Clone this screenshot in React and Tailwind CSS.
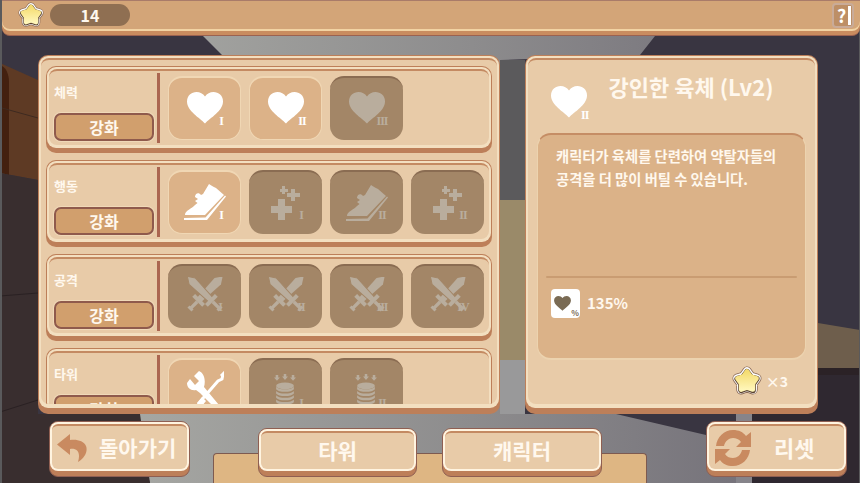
const cream = "text-[#fff8ee]";

function Heart({ className = "" }) {
  return (
    <svg viewBox="0 0 36 32" className={className} fill="currentColor">
      <path d="M18 31.500 C13 26 0 19 0 9.500 C0 3.500 4.500 0 9.500 0 C13 0 16 1.500 18 4.500 C20 1.500 23 0 26.500 0 C31.500 0 36 3.500 36 9.500 C36 19 23 26 18 31.500 Z" />
    </svg>
  );
}

function Shoe({ className = "" }) {
  return (
    <svg viewBox="0 0 42 37" className={className} fill="currentColor">
      <path d="M1 31 C1 26 8 25 11 21 L13.500 19 L11 17 L14 15 L11 13 C11 9 15 8 17 11 L19 10 L25 0 C27 1 29 3 32 4 L40 11 L21 31 Z" />
      <path d="M0 34 L21.500 33.500 L41 11.500 L42 12.500 L23 36 L0 36 Z" />
    </svg>
  );
}

function Sparkle({ className = "" }) {
  return (
    <svg viewBox="0 0 30 35" className={className} fill="currentColor">
      <path d="M7 13 H14 V20 H21 V27 H14 V34 H7 V27 H0 V20 H7 Z" />
      <path d="M20 3 H24 V7 H29 V11 H24 V15 H20 V11 H16 V7 H20 Z" />
      <path d="M11 0 H14 V3 H17 V6 H14 V8 H11 V6 H9 V3 H11 Z" />
    </svg>
  );
}

function Sword({ angle, edge }) {
  return (
    <g transform={`translate(18 17) rotate(${angle})`}>
      <path d="M0 -25 L4.500 -18 L3 8 L-3 8 L-4.500 -18 Z" stroke={edge} strokeWidth={edge ? 1 : 0} />
      <rect x="-7" y="7" width="14" height="4" />
      <rect x="-1.700" y="11" width="3.400" height="9" />
      <rect x="-2.800" y="19" width="5.600" height="3" />
    </g>
  );
}

function Swords({ className = "" }) {
  return (
    <svg viewBox="0 0 36 36" className={className} fill="currentColor">
      <Sword angle={45} />
      <Sword angle={-45} edge="#a38667" />
    </svg>
  );
}

function Tools({ className = "" }) {
  return (
    <svg viewBox="0 0 38 40" className={className} fill="currentColor" stroke="currentColor">
      <path d="M13 0 L8 5 L13 10 L9 14 L4 8 L1 12 C1 17 5 20 10 19 L14 22 L32 40 L38 40 L18 16 C20 9 18 2 13 0 Z" strokeWidth="0" />
      <path d="M35 5 L37 3 L36 8 L32 10 L12 33" strokeWidth="3" fill="none" />
      <path d="M16 26 L6 40 L12 40 L20 30 Z" strokeWidth="0" />
    </svg>
  );
}

function Coins({ className = "" }) {
  return (
    <svg viewBox="0 0 26 40" className={className} fill="currentColor">
      <path d="M2 1 H5 V4 H7 L3.500 8 L0 4 H2 Z" />
      <path d="M11.500 0 H14.500 V3 H16.500 L13 7 L9.500 3 H11.500 Z" />
      <path d="M21 1 H24 V4 H26 L22.500 8 L19 4 H21 Z" />
      <ellipse cx="13" cy="14" rx="10.500" ry="4" />
      <path d="M2.500 15 C5 19 21 19 23.500 15 V18 C21 22 5 22 2.500 18 Z M2.500 20 C5 24 21 24 23.500 20 V23 C21 27 5 27 2.500 23 Z M2.500 25 C5 29 21 29 23.500 25 V28 C21 32 5 32 2.500 28 Z M2.500 30 C5 34 21 34 23.500 30 V33 C21 37 5 37 2.500 33 Z" />
    </svg>
  );
}

function Star({ className = "" }) {
  const d = "M14 5 L17.500 9.800 L23 11.500 L19.600 16.200 L19.500 22 L14 20.100 L8.500 22 L8.400 16.200 L5 11.500 L10.500 9.800 Z";
  return (
    <svg viewBox="0 0 28 28" className={className}>
      <defs>
        <linearGradient id="starFill" x1="0" y1="0" x2="0" y2="1">
          <stop offset="0" stopColor="#f4dc70" />
          <stop offset="1" stopColor="#fff6b8" />
        </linearGradient>
      </defs>
      <path d={d} fill="#8a6a58" stroke="#8a6a58" strokeWidth="9" strokeLinejoin="round" />
      <path d={d} fill="#fff" stroke="#fff" strokeWidth="7.500" strokeLinejoin="round" />
      <path d={d} transform="translate(0 0.500)" fill="#5b4230" stroke="#5b4230" strokeWidth="5.500" strokeLinejoin="round" />
      <path d={d} fill="url(#starFill)" stroke="url(#starFill)" strokeWidth="4.200" strokeLinejoin="round" />
    </svg>
  );
}

function BackArrow({ className = "" }) {
  return (
    <svg viewBox="0 0 30 28" className={className} fill="currentColor">
      <path d="M13 0 L0 10.500 L13 21 V15 C20 14 24 18 21 28 C28 24 31 17 29 12 C27 7 20 5 13 6 Z" />
    </svg>
  );
}

function Refresh({ className = "" }) {
  const half = "M1 16 C2 7 9 0 18 0 C24 0 28 2 31 6 L36 2 V17 H21 L26 12 C24 9 21 8 18 8 C14 8 10 11 9 16 Z";
  return (
    <svg viewBox="0 0 36 36" className={className} fill="currentColor">
      <path d={half} />
      <path d={half} transform="rotate(180 18 18)" />
    </svg>
  );
}

function Slot({ icon: Icon, sizeClass, num, locked, numTop = "top-[37px]" }) {
  return (
    <div
      className={`relative w-[73px] h-[64px] rounded-[14px] shrink-0 flex items-center justify-center ${
        locked
          ? "bg-[#a38667] text-[#b9ad9d] border-t-2 border-[#8a6c52]"
          : "bg-[#dcb288] text-white border-t-2 border-x border-b border-[#f0d7b4]"
      }`}
    >
      <Icon className={sizeClass} />
      {num && (
        <span className={`absolute left-[52px] ${numTop} -translate-x-1/2 font-['Liberation_Serif',serif] font-bold text-[12px] tracking-[-1px] leading-none`}>
          {num}
        </span>
      )}
    </div>
  );
}

function Row({ label, children }) {
  return (
    <div className="rounded-[10px] bg-[#bd7f59] pt-px px-px pb-[5px] shrink-0">
      <div className="rounded-[9px] bg-[#f3dfc0] pt-[2px] px-[2px] pb-[3px]">
        <div className="rounded-[8px] bg-[#e8cba8] border-t-2 border-[#c48a62] h-[76px] flex pl-[5px]">
          <div className="w-[100px] shrink-0 flex flex-col justify-between pb-[4px]">
            <div className={`mt-[12px] text-[13px] leading-[18px] font-bold ${cream}`}>{label}</div>
            <button className="h-[28px] rounded-[7px] bg-[#d19f6d] border-2 border-[#8f5a4c] shadow-[0_0_0_1px_#f0d9b8] text-[16px] font-bold text-[#fff8ee] leading-none">
              강화
            </button>
          </div>
          <div className="w-[3px] h-[70px] mt-[2px] ml-[3px] bg-[#ab6650] shrink-0" />
          <div className="flex gap-[8px] ml-[8px] mt-[5px]">{children}</div>
        </div>
      </div>
    </div>
  );
}

function BigButton({ children, className = "" }) {
  return (
    <button className={`rounded-[9px] bg-[#bd7f59] border border-[#8f5f52] pb-[5px] ${className}`}>
      <div className="h-full rounded-[8px] bg-[#fff4e0] p-[2px]">
        <div className="h-full rounded-[6px] bg-[#e8cba8] border-t-2 border-[#c48a62] flex items-center text-[#fff8ee] font-bold">
          {children}
        </div>
      </div>
    </button>
  );
}

function Backdrop() {
  return (
    <svg viewBox="0 0 860 483" className="absolute inset-0 w-[860px] h-[483px]">
      <defs>
        <linearGradient id="floor" x1="0" y1="0" x2="1" y2="0">
          <stop offset="0" stopColor="#a6a7a3" />
          <stop offset="0.55" stopColor="#8d8c8d" />
          <stop offset="1" stopColor="#75727a" />
        </linearGradient>
      </defs>
      <rect width="860" height="483" fill="#393541" />
      <polygon points="203,36 655,36 640,55 500,60 500,200 525,200 525,360 500,360 500,414 616,414 706,435 736,440 752,483 150,483 130,414 222,55" fill="url(#floor)" />
      <rect x="500" y="60" width="25" height="140" fill="#5b5a5c" />
      <rect x="500" y="200" width="25" height="160" fill="#9a8a69" />
      <rect x="500" y="360" width="25" height="54" fill="#99999a" />
      <rect x="736" y="414" width="16" height="69" fill="#86848a" />
      <polygon points="0,63 38,80 38,180 0,173" fill="#5e3a24" />
      <path d="M2 173 V66 C6 68 9 74 9 82 V175 Z" fill="#43200f" />
      <line x1="2" y1="108" x2="38" y2="118" stroke="#3e2a20" />
      <polygon points="0,173 38,180 38,414 140,414 150,483 0,483" fill="#392e2f" />
      <line x1="0" y1="296" x2="38" y2="293" stroke="#2a2123" />
      <line x1="0" y1="412" x2="38" y2="400" stroke="#2a2123" />
      <polygon points="818,323 860,330 860,368 818,368" fill="#6e5e4c" />
      <rect x="818" y="368" width="42" height="7" fill="#2b2226" />
      <polygon points="752,375 860,375 860,483 752,483" fill="#2f2830" />
      <rect x="752" y="414" width="108" height="69" fill="#2f2830" />
      <rect x="0" width="2" height="483" fill="#5a5a5c" />
      <rect x="859" width="1" height="483" fill="#5a5a5c" />
    </svg>
  );
}

export default function App() {
  return (
    <div className="relative w-[860px] h-[483px] overflow-hidden font-['Noto_Sans_CJK_KR',sans-serif]">
      <Backdrop />
      <div className="absolute left-[213px] top-[453px] w-[434px] h-[30px] rounded-t-[4px] bg-[#deb683] border border-b-0 border-[#7d5a50]" />

      <div className="relative flex flex-col">
        {/* Top bar */}
        <div className="ml-[2px] h-[36px] rounded-b-[8px] bg-[#c98c5f] border-b border-[#9b6250]">
          <div className="h-[31px] rounded-b-[8px] bg-[#f2d3a3] pb-[2px]">
            <div className="h-full rounded-b-[8px] bg-[#d3a578] border-t border-[#a97b69] flex items-center pl-[16px] pr-[6px]">
              <Star className="w-[26px] h-[26px]" />
              <div className={`ml-[6px] w-[80px] h-[22px] rounded-full bg-[#8f6f52] flex items-center justify-center text-[16px] font-bold ${cream}`}>
                14
              </div>
              <div className="ml-auto relative w-[22px] h-[25px] rounded-[4px] border-2 border-[#c9ab98] bg-[#bd8f66] flex items-center pl-[3px] text-[18px] font-bold text-white leading-none">
                ?
                <span className="absolute right-[1px] top-[1px] w-[3px] h-[19px] bg-white" />
              </div>
            </div>
          </div>
        </div>

        {/* Panels */}
        <div className="flex gap-[25px] mt-[19px] ml-[38px]">
          <div className="w-[462px] h-[359px] rounded-[10px] bg-[#bd7f59] pb-[6px] pt-px px-px">
            <div className="h-full rounded-[9px] bg-[#f3dfc0] pt-[2px] px-[2px] pb-[4px]">
              <div className="h-full rounded-[8px] bg-[#e8cba8] border-t-2 border-[#c48a62] pt-[6px] px-[5px] overflow-hidden">
                <div className="flex flex-col gap-[7px] h-[338px] overflow-hidden">
                  <Row label="체력">
                    <Slot icon={Heart} sizeClass="w-[36px] h-[32px] -mt-[2px]" num="I" />
                    <Slot icon={Heart} sizeClass="w-[36px] h-[32px] -mt-[2px]" num="II" />
                    <Slot icon={Heart} sizeClass="w-[36px] h-[32px] -mt-[2px]" num="III" locked />
                  </Row>
                  <Row label="행동">
                    <Slot icon={Shoe} sizeClass="w-[42px] h-[37px]" num="I" />
                    <Slot icon={Sparkle} sizeClass="w-[30px] h-[35px]" num="I" locked />
                    <Slot icon={Shoe} sizeClass="w-[42px] h-[37px]" num="II" locked />
                    <Slot icon={Sparkle} sizeClass="w-[30px] h-[35px]" num="II" locked />
                  </Row>
                  <Row label="공격">
                    <Slot icon={Swords} sizeClass="w-[36px] h-[36px] -mt-[4px]" num="I" numTop="top-[35px]" locked />
                    <Slot icon={Swords} sizeClass="w-[36px] h-[36px] -mt-[4px]" num="II" numTop="top-[35px]" locked />
                    <Slot icon={Swords} sizeClass="w-[36px] h-[36px] -mt-[4px]" num="III" numTop="top-[35px]" locked />
                    <Slot icon={Swords} sizeClass="w-[36px] h-[36px] -mt-[4px]" num="IV" numTop="top-[35px]" locked />
                  </Row>
                  <Row label="타워">
                    <Slot icon={Tools} sizeClass="w-[38px] h-[40px]" />
                    <Slot icon={Coins} sizeClass="w-[22px] h-[34px] -ml-[1px]" num="I" locked />
                    <Slot icon={Coins} sizeClass="w-[22px] h-[34px] -ml-[1px]" num="II" locked />
                  </Row>
                </div>
              </div>
            </div>
          </div>

          {/* Detail */}
          <div className="w-[293px] h-[359px] rounded-[10px] bg-[#bd7f59] pb-[6px] pt-px px-px">
            <div className="h-full rounded-[9px] bg-[#f3dfc0] pt-[2px] px-[2px] pb-[4px]">
              <div className="h-full rounded-[8px] bg-[#e8cba8] border-t-2 border-[#c48a62] px-[9px] flex flex-col">
                <div className="relative h-[73px] shrink-0">
                  <div className="absolute left-[14px] top-[26px] text-white">
                    <Heart className="w-[36px] h-[32px]" />
                    <span className="absolute left-[30px] top-[23px] font-['Liberation_Serif',serif] text-[12px] font-bold tracking-[-1px] leading-none">II</span>
                  </div>
                  <div className={`pl-[39px] pt-[11px] text-center text-[22px] leading-[30px] font-bold ${cream}`}>
                    강인한 육체 (Lv2)
                  </div>
                </div>
                <div className="h-[227px] rounded-[14px] bg-[#dbb288] border-t-2 border-[#c58d65] border-b-2 border-b-[#ecd3af] border-x border-x-[#ecd3af] shrink-0 flex flex-col">
                  <p className={`mt-[9px] mx-[18px] text-[14.3px] leading-[23px] font-bold whitespace-nowrap ${cream}`}>
                    캐릭터가 육체를 단련하여 약탈자들의
                    <br />
                    공격을 더 많이 버틸 수 있습니다.
                  </p>
                  <div className="mt-auto mx-[8px] h-[2px] bg-[#c99c72] rounded-full" />
                  <div className="flex items-center gap-[7px] ml-[13px] mt-[11px] mb-[40px]">
                    <div className="relative w-[29px] h-[29px] rounded-[4px] bg-white text-[#7a6b54] flex pl-[3px] pt-[7px]">
                      <Heart className="w-[17px] h-[15px]" />
                      <span className="absolute right-[1px] bottom-[1px] text-[8px] font-bold leading-none">%</span>
                    </div>
                    <span className={`text-[15px] font-bold ${cream}`}>135%</span>
                  </div>
                </div>
                <div className="flex items-center justify-end gap-[4px] pr-[18px] mt-[6px]">
                  <Star className="w-[30px] h-[30px]" />
                  <span className={`text-[14px] font-bold ${cream}`}>×3</span>
                </div>
              </div>
            </div>
          </div>
        </div>

        {/* Bottom buttons */}
        <div className="flex items-end mt-[7px] ml-[49px]">
          <BigButton className="w-[141px] h-[56px]">
            <BackArrow className="ml-[5px] w-[30px] h-[28px] text-[#c98a60]" />
            <span className="ml-[12px] text-[21px]">돌아가기</span>
          </BigButton>
          <BigButton className="ml-[68px] w-[159px] h-[49px]">
            <span className="w-full text-center text-[21px]">타워</span>
          </BigButton>
          <BigButton className="ml-[25px] w-[160px] h-[49px]">
            <span className="w-full text-center text-[21px]">캐릭터</span>
          </BigButton>
          <BigButton className="ml-[104px] w-[141px] h-[56px]">
            <Refresh className="ml-[6px] w-[36px] h-[36px] text-[#c98a60]" />
            <span className="ml-[23px] text-[22px]">리셋</span>
          </BigButton>
        </div>
      </div>
    </div>
  );
}
